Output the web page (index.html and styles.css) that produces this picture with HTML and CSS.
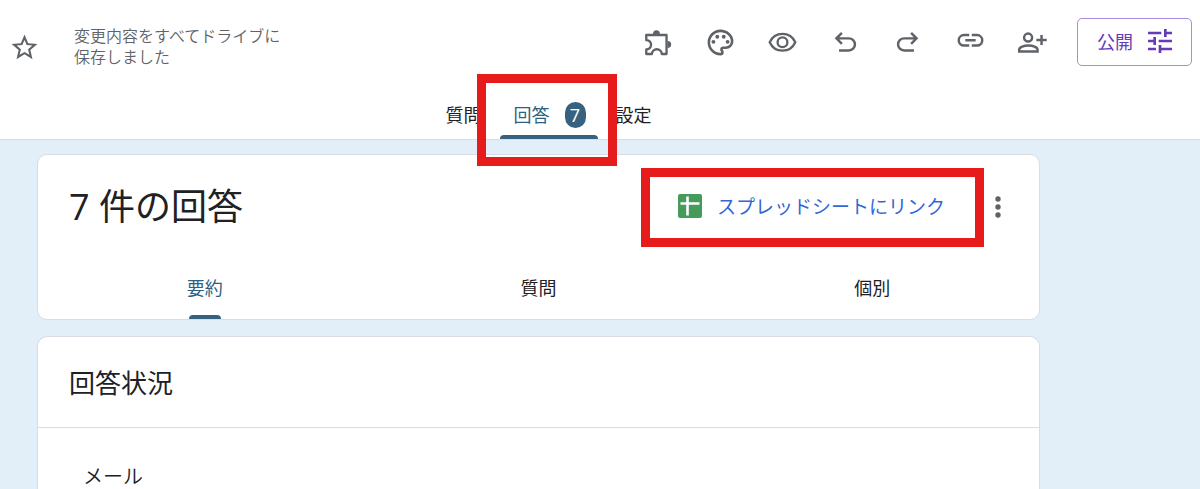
FILE: index.html
```html
<!DOCTYPE html>
<html lang="ja">
<head>
<meta charset="utf-8">
<meta name="viewport" content="width=device-width, initial-scale=1">
<title>7 件の回答</title>
<link rel="stylesheet" href="styles.css">
</head>
<body>
<header class="header">
  <div class="topbar">
    <button class="icon-button star" type="button" aria-label="スター">
      <svg viewBox="0 0 24 24" fill="currentColor"><path d="M22 9.24l-7.19-.62L12 2 9.19 8.63 2 9.24l5.46 4.73L5.82 21 12 17.27 18.18 21l-1.63-7.03L22 9.24zM12 15.4l-3.76 2.27 1-4.28-3.32-2.88 4.38-.38L12 6.1l1.71 4.04 4.38.38-3.32 2.88 1 4.28L12 15.4z"/></svg>
    </button>
    <p class="save-status">変更内容をすべてドライブに保存しました</p>
    <div class="tools">
      <button class="icon-button" type="button" aria-label="アドオン">
        <svg viewBox="0 0 24 24" fill="none" stroke="currentColor" stroke-width="1.8" stroke-linejoin="round"><path d="M3.3 6.2H19V20.9H15.3C15.3 18.6 13.5 17.2 11.5 17.2S7.7 18.6 7.7 20.9H3.3V17.4C5.5 17.2 7 15.7 7 13.8S5.5 10.4 3.3 10.2Z"/><path d="M8.5 5.6a2.7 3.1 0 0 1 5.4 0zM19.7 10.8a2.9 2.7 0 0 1 0 5.4z" fill="currentColor" stroke="none"/></svg>
      </button>
      <button class="icon-button" type="button" aria-label="テーマをカスタマイズ">
        <svg viewBox="0 0 24 24" fill="currentColor"><path d="M12 22C6.49 22 2 17.51 2 12S6.49 2 12 2s10 4.04 10 9c0 3.31-2.69 6-6 6h-1.77c-.28 0-.5.22-.5.5 0 .12.05.23.13.33.41.47.64 1.06.64 1.67A2.5 2.5 0 0 1 12 22zm0-18c-4.41 0-8 3.59-8 8s3.59 8 8 8c.28 0 .5-.22.5-.5a.54.54 0 0 0-.14-.35c-.41-.46-.63-1.05-.63-1.65a2.5 2.5 0 0 1 2.5-2.5H16c2.21 0 4-1.79 4-4 0-3.86-3.59-7-8-7z"/><circle cx="6.5" cy="11.5" r="1.5"/><circle cx="9.5" cy="7.5" r="1.5"/><circle cx="14.5" cy="7.5" r="1.5"/><circle cx="17.5" cy="11.5" r="1.5"/></svg>
      </button>
      <button class="icon-button" type="button" aria-label="プレビュー">
        <svg viewBox="0 0 24 24" fill="none" stroke="currentColor" stroke-width="1.8"><path d="M2.1 11.8C3.8 8 7.6 5.3 12 5.3S20.2 8 21.9 11.8C20.2 15.6 16.4 18.3 12 18.3S3.8 15.6 2.1 11.8Z"/><circle cx="12" cy="11.8" r="3.8"/></svg>
      </button>
      <button class="icon-button" type="button" aria-label="元に戻す">
        <svg viewBox="0 0 24 24" fill="none" stroke="currentColor" stroke-width="1.9"><path d="M9.2 4.6 5 8.8 9.2 13M5.2 8.8H14.6a4.7 4.7 0 0 1 0 9.4H7"/></svg>
      </button>
      <button class="icon-button" type="button" aria-label="やり直し">
        <svg viewBox="0 0 24 24" fill="none" stroke="currentColor" stroke-width="1.9"><path d="M14.8 4.6 19 8.8 14.8 13M18.8 8.8H9.4a4.7 4.7 0 0 0 0 9.4H17"/></svg>
      </button>
      <button class="icon-button" type="button" aria-label="リンクをコピー">
        <svg viewBox="0 0 24 24" fill="none" stroke="currentColor" stroke-width="1.9"><path d="M11 6.2H7a4.1 4.1 0 0 0 0 8.2h4M13 6.2h4a4.1 4.1 0 0 1 0 8.2h-4M8 10.3h8"/></svg>
      </button>
      <button class="icon-button" type="button" aria-label="共同編集者を追加">
        <svg viewBox="0 0 24 24" fill="none" stroke="currentColor" stroke-width="1.9"><circle cx="8.6" cy="8.2" r="3.1"/><path d="M1.7 18.9V17.5C1.7 15.5 5.5 14.3 8.8 14.3S15.9 15.5 15.9 17.5V18.9ZM19 6.1V14M15 10H23"/></svg>
      </button>
    </div>
    <button class="publish" type="button">公開
      <svg viewBox="0 0 24 24" fill="currentColor" aria-hidden="true"><path d="M3 17v2h6v-2H3zM3 5v2h10V5H3zm10 16v-2h8v-2h-8v-2h-2v6h2zM7 9v2H3v2h4v2h2V9H7zm14 4v-2H11v2h10zm-6-4h2V7h4V5h-4V3h-2v6z"/></svg>
    </button>
  </div>
  <nav class="main-tabs">
    <a class="main-tab" href="#questions">質問</a>
    <a class="main-tab main-tab-active" href="#responses" aria-current="page">回答 <span class="badge">7</span></a>
    <a class="main-tab" href="#settings">設定</a>
  </nav>
</header>
<main class="content">
  <section class="card">
    <div class="card-head">
      <h1 class="title">7 件の回答</h1>
      <a class="sheet-link" href="#sheet">
        <svg viewBox="0 0 24 24" aria-hidden="true"><rect width="24" height="24" rx="2" fill="#459b59"/><path d="M2.5 9.5H21.5M9.5 2.5V21.5" stroke="#fff" stroke-width="2.6"/></svg>
        スプレッドシートにリンク
      </a>
      <button class="more" type="button" aria-label="その他">
        <svg viewBox="0 0 6 22" fill="currentColor"><circle cx="3" cy="3" r="2.7"/><circle cx="3" cy="11" r="2.7"/><circle cx="3" cy="19" r="2.7"/></svg>
      </button>
    </div>
    <nav class="view-tabs">
      <a class="view-tab view-tab-active" href="#summary" aria-current="true">要約</a>
      <a class="view-tab" href="#question">質問</a>
      <a class="view-tab" href="#individual">個別</a>
    </nav>
  </section>
  <section class="card card-open">
    <h2 class="section-title">回答状況</h2>
    <h3 class="field-title">メール</h3>
  </section>
</main>
</body>
</html>
```
FILE: styles.css
```css
*,
*::before,
*::after {
  box-sizing: border-box;
}

body {
  margin: 0;
  background: #e2eff9;
  color: #202124;
  font-family: "Noto Sans CJK JP", sans-serif;
  font-size: 18px;
  line-height: 24px;
}

a {
  color: inherit;
  text-decoration: none;
}

button {
  padding: 0;
  border: 0;
  background: none;
  color: #5f6368;
  font: inherit;
}

svg {
  display: block;
}

.header {
  background: #fff;
  border-bottom: 1px solid #d9dde3;
}

.topbar {
  display: flex;
  align-items: center;
  height: 94px;
  padding: 0 8px 0 9px;
}

.icon-button,
.icon-button svg {
  width: 31px;
  height: 31px;
}

.save-status {
  width: 212px;
  margin: 0 auto 0 34px;
  padding-bottom: 2px;
  color: #5f6368;
  font-size: 16px;
  font-weight: 350;
  line-height: 21px;
}

.tools {
  display: flex;
  justify-content: space-between;
  width: 406px;
  margin-right: 29px;
  padding-bottom: 10px;
}

.publish {
  display: flex;
  align-items: center;
  justify-content: center;
  gap: 11px;
  width: 115px;
  height: 48px;
  margin-bottom: 10px;
  padding: 0 0 2px 4px;
  border: 1px solid #a98be0;
  border-radius: 5px;
  color: #673ab7;
}

.publish svg {
  width: 32px;
  height: 32px;
}

.main-tabs {
  display: flex;
  justify-content: center;
  gap: 18px;
  padding-right: 103px;
}

.main-tab {
  position: relative;
  height: 45px;
  padding-top: 8px;
}

.main-tab-active {
  display: flex;
  align-items: flex-start;
  gap: 15px;
  padding-right: 12px;
  padding-left: 14px;
  color: #2f5f82;
}

.main-tab-active::before {
  position: absolute;
  z-index: 1;
  top: -20px;
  right: -19px;
  left: -23px;
  height: 92px;
  border: 9px solid #e61b1b;
  content: "";
}

.main-tab-active::after {
  position: absolute;
  right: 0;
  bottom: 0;
  left: 0;
  height: 4px;
  border-radius: 4px 4px 0 0;
  background: #366280;
  content: "";
}

.badge {
  width: 21px;
  height: 26px;
  border-radius: 11px;
  background: #366280;
  color: #fff;
  font-family: "Open Sans", sans-serif;
  line-height: 26px;
  text-align: center;
}

.content {
  display: grid;
  gap: 16px;
  padding: 14px 160px 0 37px;
}

.card {
  border: 1px solid #d9dde3;
  border-radius: 10px;
  background: #fff;
}

.card-open {
  border-bottom: 0;
  border-radius: 10px 10px 0 0;
}

.card-head {
  display: flex;
  align-items: center;
  height: 104px;
  padding: 0 38px 0 31px;
}

.title {
  margin: 0 auto 0 0;
  font-family: "Open Sans", "Noto Sans CJK JP", sans-serif;
  font-size: 36px;
  font-weight: 400;
  line-height: 48px;
}

.sheet-link {
  position: relative;
  display: flex;
  align-items: center;
  gap: 15px;
  margin-right: 50px;
  margin-bottom: 2px;
  color: #3367d6;
  font-size: 19px;
}

.sheet-link::before {
  position: absolute;
  top: -26px;
  right: -39px;
  bottom: -29px;
  left: -37px;
  border: 9px solid #e61b1b;
  content: "";
}

.sheet-link svg {
  width: 24px;
  height: 24px;
}

.more svg {
  width: 6px;
  height: 22px;
}

.view-tabs {
  display: grid;
  grid-template-columns: repeat(3, 1fr);
  justify-items: center;
}

.view-tab {
  display: grid;
  justify-items: center;
  align-content: space-between;
  height: 60px;
  padding-top: 16px;
}

.view-tab-active {
  color: #2f5f82;
}

.view-tab-active::after {
  width: 32px;
  height: 4px;
  border-radius: 4px 4px 0 0;
  background: #366280;
  content: "";
}

.section-title {
  margin: 0;
  padding: 27px 31px;
  border-bottom: 1px solid #d9dde3;
  font-size: 26px;
  font-weight: 400;
  line-height: 36px;
}

.field-title {
  margin: 0;
  padding: 35px 45px 0;
  font-size: 20px;
  font-weight: 350;
  line-height: 26px;
}
```
